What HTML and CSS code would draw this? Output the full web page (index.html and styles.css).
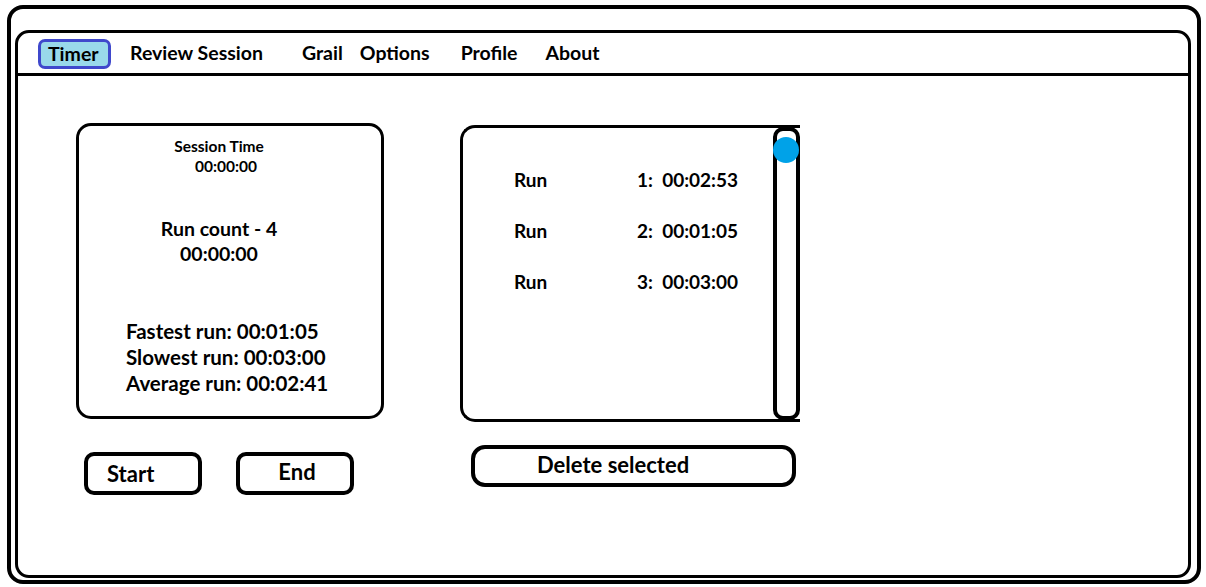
FILE: index.html
```html
<!DOCTYPE html>
<html>
<head>
<meta charset="utf-8">
<link rel="stylesheet" href="styles.css">
</head>
<body>
<div class="outer">
  <div class="inner">
    <nav class="nav">
      <span class="tab active">Timer</span>
      <span class="tab t-review">Review Session</span>
      <span class="tab t-grail">Grail</span>
      <span class="tab t-options">Options</span>
      <span class="tab t-profile">Profile</span>
      <span class="tab t-about">About</span>
    </nav>
    <main class="content">
      <section class="left">
        <div class="card stats">
          <div class="session">
            <div>Session Time</div>
            <div class="session-time">00:00:00</div>
          </div>
          <div class="runcount">
            <div>Run count - 4</div>
            <div>00:00:00</div>
          </div>
          <div class="summary">
            <div>Fastest run: 00:01:05</div>
            <div>Slowest run: 00:03:00</div>
            <div>Average run: 00:02:41</div>
          </div>
        </div>
        <div class="buttons">
          <button class="btn btn-start">Start</button>
          <button class="btn btn-end">End</button>
        </div>
      </section>
      <section class="right">
        <div class="card list">
          <div class="rows">
            <div class="row"><span class="run">Run</span><span class="time">1:&nbsp; 00:02:53</span></div>
            <div class="row"><span class="run">Run</span><span class="time">2:&nbsp; 00:01:05</span></div>
            <div class="row"><span class="run">Run</span><span class="time">3:&nbsp; 00:03:00</span></div>
          </div>
          <div class="scrollbar"><span class="thumb"></span></div>
        </div>
        <button class="btn btn-delete">Delete selected</button>
      </section>
    </main>
  </div>
</div>
</body>
</html>
```

FILE: styles.css
```css
html, body {
  margin: 0;
  padding: 0;
  background: #ffffff;
}
body {
  font-family: "Lato", "Open Sans", "Liberation Sans", sans-serif;
  font-weight: 700;
  color: #000;
}
.outer {
  box-sizing: border-box;
  margin: 5px 0 0 7px;
  width: 1194px;
  height: 579px;
  border: 4px solid #000;
  border-radius: 16px;
  padding: 21px 6px 2px 4px;
}
.inner {
  box-sizing: border-box;
  height: 100%;
  border: 3px solid #000;
  border-radius: 14px;
}
.nav {
  box-sizing: border-box;
  height: 43px;
  border-bottom: 3px solid #000;
  display: flex;
  align-items: center;
  font-size: 19.5px;
  padding-left: 20px;
}
.tab {
  display: inline-block;
  line-height: 24px;
}
.tab.active {
  box-sizing: border-box;
  width: 73px;
  height: 30px;
  line-height: 24px;
  padding-left: 7px;
  border: 3px solid #3f48cc;
  border-radius: 7px;
  background: #99d9ea;
  margin-top: 1px;
}
.t-review { margin-left: 19px; }
.t-grail { margin-left: 39px; }
.t-options { margin-left: 17px; }
.t-profile { margin-left: 31px; }
.t-about { margin-left: 28px; }

.content {
  display: flex;
  align-items: flex-start;
  padding: 47px 0 0 58px;
}
.card {
  box-sizing: border-box;
  border: 3px solid #000;
  border-radius: 15px;
}
.left {
  width: 308px;
}
.stats {
  height: 296px;
  display: flex;
  flex-direction: column;
  align-items: center;
  padding-right: 22px;
}
.session {
  font-size: 15.5px;
  line-height: 20px;
  text-align: center;
  margin-top: 10px;
}
.session-time {
  padding-left: 14px;
}
.runcount {
  font-size: 19.5px;
  line-height: 25px;
  text-align: center;
  margin-top: 40px;
}
.summary {
  align-self: flex-start;
  margin: 52px 0 0 47px;
  font-size: 20.5px;
  line-height: 26px;
}
.buttons {
  display: flex;
  margin: 33px 0 0 8px;
  gap: 34px;
}
.btn {
  box-sizing: border-box;
  font-family: inherit;
  font-weight: 700;
  font-size: 22px;
  color: #000;
  background: #fff;
  border: 4px solid #000;
  border-radius: 10px;
  width: 118px;
  height: 43px;
  padding: 0;
}
.btn-start { text-align: left; padding-left: 19px; }
.btn-end { padding-bottom: 4px; padding-left: 4px; }

.right {
  margin-left: 76px;
  margin-top: 2px;
  width: 340px;
}
.list {
  height: 297px;
  display: flex;
  border-right: none;
  border-top-right-radius: 0;
  border-bottom-right-radius: 0;
}
.rows {
  flex: 1;
  padding: 39px 0 0 51px;
  font-size: 19px;
}
.row {
  display: flex;
  height: 51px;
  line-height: 26px;
}
.run { width: 123px; }
.scrollbar {
  position: relative;
  box-sizing: border-box;
  width: 27px;
  margin: -1px 0 -1px 0;
  border: 4px solid #000;
  border-radius: 10px;
}
.thumb {
  position: absolute;
  left: -4px;
  top: 6px;
  width: 26px;
  height: 26px;
  border-radius: 50%;
  background: #00a2e8;
}
.btn-delete {
  display: block;
  width: 325px;
  height: 42px;
  margin: 23px 0 0 11px;
  border-radius: 14px;
  text-align: left;
  padding: 0 0 4px 62px;
}
```
